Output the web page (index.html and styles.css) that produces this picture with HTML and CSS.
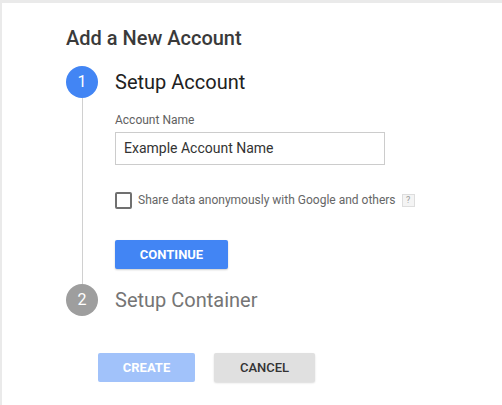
FILE: index.html
```html
<!DOCTYPE html>
<html>
<head>
<meta charset="utf-8">
<link rel="stylesheet" href="styles.css">
</head>
<body>
<div class="card">
  <h1 class="title">Add a New Account</h1>
  <div class="step step-active">
    <div class="rail">
      <div class="num num-active">1</div>
      <div class="rail-line"></div>
    </div>
    <div class="step-content">
      <div class="step-title">Setup Account</div>
      <div class="step-body">
        <label class="field-label">Account Name</label>
        <div class="input">Example Account Name</div>
        <div class="check-row">
          <span class="checkbox"></span>
          <span class="check-text">Share data anonymously with Google and others</span>
          <span class="help">?</span>
        </div>
        <button class="btn btn-primary">CONTINUE</button>
      </div>
    </div>
  </div>
  <div class="step">
    <div class="rail">
      <div class="num num-idle">2</div>
    </div>
    <div class="step-content">
      <div class="step-title step-title-idle">Setup Container</div>
    </div>
  </div>
  <div class="actions">
    <button class="btn btn-disabled">CREATE</button>
    <button class="btn btn-flat">CANCEL</button>
  </div>
</div>
</body>
</html>
```
FILE: styles.css
```css
html, body {
  margin: 0;
  padding: 0;
}
body {
  background: #eaeaea;
  font-family: Roboto, "Liberation Sans", Arial, sans-serif;
  height: 405px;
  overflow: hidden;
}
.card {
  background: #ffffff;
  margin: 3px 0 0 2px;
  height: 402px;
  padding: 23px 0 0 64px;
  box-sizing: border-box;
}
.title {
  margin: 0;
  font-size: 20px;
  line-height: 24px;
  font-weight: 500;
  color: #3a3a3a;
}
.step {
  display: flex;
  column-gap: 17px;
}
.step-active {
  margin-top: 16px;
}
.rail {
  width: 32px;
  display: flex;
  flex-direction: column;
  flex: none;
}
.num {
  width: 32px;
  height: 32px;
  border-radius: 50%;
  color: #fff;
  font-size: 16px;
  line-height: 32px;
  text-align: center;
}
.num-active { background: #4285f4; }
.num-idle { background: #9e9e9e; }
.rail-line {
  flex: 1;
  width: 1px;
  margin-left: 16px;
  background: #d0d0d0;
}
.step-content {
  flex: 1;
}
.step-active .step-content {
  padding-bottom: 15px;
}
.step-title {
  font-size: 20px;
  line-height: 32px;
  color: #212121;
}
.step-title-idle {
  color: #757575;
}
.step-body {
  padding-top: 14px;
  display: flex;
  flex-direction: column;
  align-items: flex-start;
}
.field-label {
  font-size: 12px;
  line-height: 16px;
  color: #616161;
}
.input {
  margin-top: 4px;
  width: 270px;
  height: 33px;
  box-sizing: border-box;
  border: 1px solid #cccccc;
  padding: 0 8px;
  font-size: 14px;
  line-height: 31px;
  color: #333333;
}
.check-row {
  margin-top: 27px;
  display: flex;
  align-items: center;
}
.checkbox {
  width: 17px;
  height: 17px;
  box-sizing: border-box;
  border: 2px solid #707070;
  border-radius: 2px;
}
.check-text {
  margin-left: 6px;
  font-size: 12px;
  line-height: 17px;
  color: #666666;
}
.help {
  margin-left: 6px;
  width: 13px;
  height: 13px;
  box-sizing: border-box;
  border: 1px solid #dddddd;
  background: #f4f4f4;
  color: #9a9a9a;
  font-size: 9px;
  line-height: 11px;
  text-align: center;
}
.btn {
  font-family: Roboto, "Liberation Sans", Arial, sans-serif;
  border: none;
  border-radius: 2px;
  font-size: 13px;
  height: 29px;
  padding: 0;
  cursor: pointer;
}
.btn-primary {
  margin-top: 31px;
  width: 113px;
  background: #4285f4;
  color: #fff;
  font-weight: 700;
  box-shadow: 0 1px 2px rgba(0,0,0,0.2);
}
.actions {
  margin-top: 37px;
  padding-left: 32px;
  display: flex;
  column-gap: 19px;
}
.btn-disabled {
  width: 97px;
  background: #a1c2fa;
  color: #fff;
  font-weight: 700;
}
.btn-flat {
  width: 101px;
  background: #e0e0e0;
  color: #333;
  font-weight: 500;
  box-shadow: 0 1px 2px rgba(0,0,0,0.15);
}
```
